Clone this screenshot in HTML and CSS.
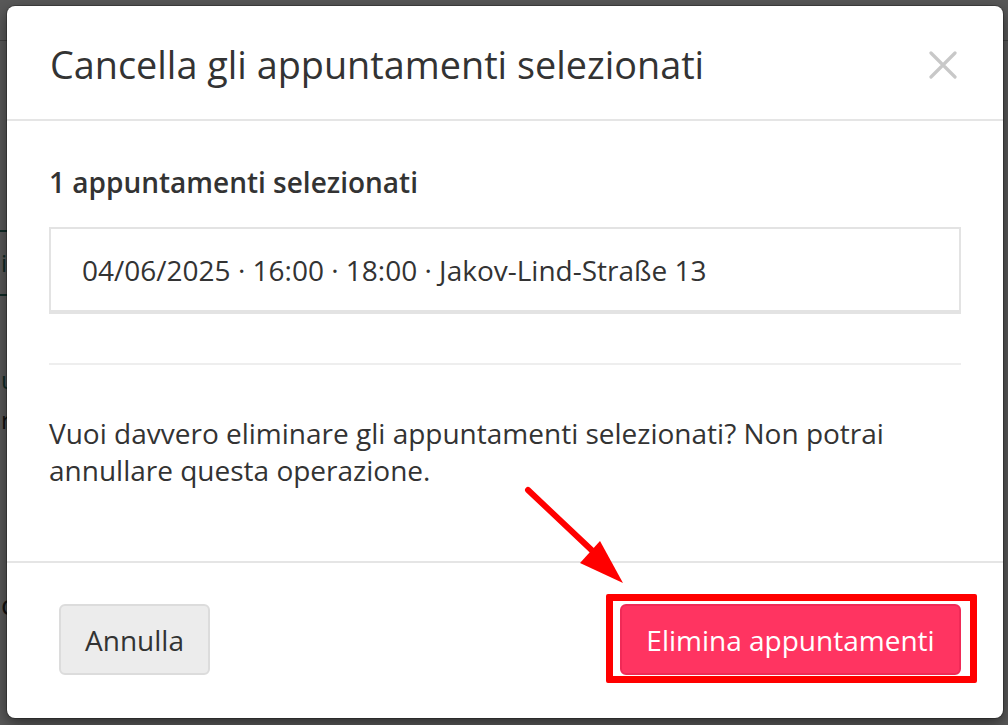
FILE: index.html
```html
<!DOCTYPE html>
<html lang="it">
<head>
<meta charset="utf-8">
<link rel="stylesheet" href="styles.css">
</head>
<body>
<div class="page">
  <div class="page-line l1"></div>
  <div class="page-tab"><span class="page-glyph">i</span></div>
  <div class="page-letters"><span class="teal">u</span><span>r</span></div>
  <div class="page-c">c</div>
</div>
<div class="backdrop"></div>
<div class="modal">
  <div class="modal-header">
    <h4 class="modal-title">Cancella gli appuntamenti selezionati</h4>
    <button class="close" aria-label="Chiudi">
      <svg width="28" height="28" viewBox="0 0 28 28"><path d="M2 2L26 26M26 2L2 26" stroke="#c8c8c8" stroke-width="3.2" stroke-linecap="round"/></svg>
    </button>
  </div>
  <div class="modal-body">
    <h5 class="count">1 appuntamenti selezionati</h5>
    <div class="well">04/06/2025 · 16:00 · 18:00 · Jakov-Lind-Straße 13</div>
    <hr class="sep">
    <p class="question">Vuoi davvero eliminare gli appuntamenti selezionati? Non potrai annullare questa operazione.</p>
  </div>
  <div class="modal-footer">
    <button class="btn btn-default">Annulla</button>
    <button class="btn btn-danger">Elimina appuntamenti</button>
  </div>
</div>
<div class="highlight"></div>
<svg class="arrow" width="120" height="110" viewBox="0 0 120 110">
  <line x1="8" y1="8" x2="80" y2="76" stroke="#ff0000" stroke-width="6" stroke-linecap="round"/>
  <polygon points="103,101 60,81 80,59" fill="#ff0000"/>
</svg>
</body>
</html>
```
FILE: styles.css
```css
* { box-sizing: border-box; }
html, body { margin: 0; padding: 0; }
body {
  width: 1008px;
  height: 725px;
  overflow: hidden;
  font-family: "Open Sans", "Noto Sans", sans-serif;
  color: #333;
  background: #fff;
  position: relative;
}
.page { position: absolute; inset: 0; }
.page-line { position: absolute; left: 0; right: 0; height: 1px; background: #bbb; }
.l1 { top: 40px; }
.page-tab {
  position: absolute; left: 0; top: 230px; width: 60px; height: 66px;
  border-top: 2px solid #2e7d6e; border-bottom: 2px solid #2e7d6e;
  font-size: 24px; line-height: 62px;
}
.page-glyph { color: #2e7d6e; padding-left: 1px; }
.page-letters { position: absolute; left: 1px; top: 360px; font-size: 24px; display: flex; flex-direction: column; line-height: 40px; }
.teal { color: #2e7d6e; }
.page-c { position: absolute; left: 1px; top: 585px; font-size: 28px; }
.backdrop { position: absolute; inset: 0; background: rgba(0,0,0,0.65); }
.modal {
  position: absolute;
  left: 7px; top: 6px;
  width: 996px; height: 712px;
  background: #fff;
  border-radius: 8px;
  box-shadow: 0 0 0 1px rgba(0,0,0,0.25), 0 5px 15px rgba(0,0,0,0.5);
  display: flex;
  flex-direction: column;
}
.modal-header {
  height: 115px;
  border-bottom: 2px solid #e5e5e5;
  display: flex;
  align-items: center;
  justify-content: space-between;
  padding: 4px 43px 0 43px;
}
.modal-title {
  margin: 0;
  font-size: 37.8px;
  font-weight: 400;
  color: #333;
}
.close {
  background: none; border: 0; padding: 0; margin: 0;
  width: 28px; height: 28px; display: flex;
  margin-right: 3px;
}
.modal-body {
  flex: 1;
  padding: 42px 42px 0 42px;
}
.count {
  margin: 0;
  font-size: 28px;
  font-weight: 600;
  line-height: 38px;
}
.well {
  margin-top: 26px;
  height: 87px;
  border: 2px solid #e3e3e3;
  border-bottom-width: 4px;
  padding: 0 31px;
  display: flex;
  align-items: center;
  font-size: 28px;
}
.sep {
  margin: 49px 0 0 0;
  border: 0;
  border-top: 2px solid #eee;
}
.question {
  margin: 50px 0 0 0;
  font-size: 28px;
  line-height: 37px;
}
.modal-footer {
  height: 157px;
  border-top: 2px solid #e5e5e5;
  display: flex;
  align-items: center;
  justify-content: space-between;
  padding: 0 42px 2px 52px;
}
.btn {
  font-family: inherit;
  font-size: 28px;
  height: 71px;
  border-radius: 6px;
  padding: 0;
  cursor: pointer;
}
.btn-default {
  background: #ececec;
  border: 2px solid #dcdcdc;
  color: #333;
  width: 151px;
}
.btn-danger {
  background: #ff3461;
  border: 2px solid #f02a57;
  color: #fff;
  width: 341px;
}
.highlight {
  position: absolute;
  left: 606px; top: 594px;
  width: 371px; height: 89px;
  border: 7px solid #ff0000;
  border-radius: 2px;
}
.arrow {
  position: absolute;
  left: 520px; top: 482px;
}
```
